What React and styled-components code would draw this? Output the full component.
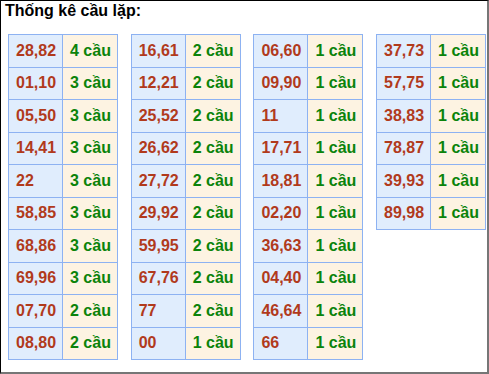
import React from "react";
import styled, { createGlobalStyle } from "styled-components";

const Global = createGlobalStyle`
  html, body { margin: 0; padding: 0; background: #fff; }
  body { font-family: "Liberation Sans", Arial, sans-serif; }
`;

const Frame = styled.div`
  box-sizing: border-box;
  width: 489px;
  height: 374px;
  border-top: 1px solid #000;
  border-left: 1px solid #000;
  border-right: 2px solid #767676;
  border-bottom: 2px solid #767676;
  background: #fff;
  padding-top: 1px;
`;

const Title = styled.div`
  font-size: 16px;
  font-weight: bold;
  color: #000;
  line-height: 18px;
  padding-left: 4px;
`;

const Tables = styled.div`
  display: flex;
  align-items: flex-start;
  gap: 12.7px;
  padding-left: 7px;
  margin-top: 14px;
`;

const Grid = styled.div`
  display: grid;
  grid-template-columns: 54px 55px;
  border-top: 1px solid #8db2f2;
  border-left: 1px solid #8db2f2;
`;

const Cell = styled.div`
  box-sizing: border-box;
  height: 32.5px;
  border-right: 1px solid #8db2f2;
  border-bottom: 1px solid #8db2f2;
  display: flex;
  align-items: center;
  padding-left: ${(p) => (p.$kind === "num" ? "7px" : "7px")};
  font-size: 16px;
  font-weight: bold;
  white-space: nowrap;
  background: ${(p) => (p.$kind === "num" ? "#e0edfd" : "#fdf3e2")};
  color: ${(p) => (p.$kind === "num" ? "#b13a1c" : "#0b830b")};
`;

const data = [
  [
    ["28,82", 4], ["01,10", 3], ["05,50", 3], ["14,41", 3], ["22", 3],
    ["58,85", 3], ["68,86", 3], ["69,96", 3], ["07,70", 2], ["08,80", 2],
  ],
  [
    ["16,61", 2], ["12,21", 2], ["25,52", 2], ["26,62", 2], ["27,72", 2],
    ["29,92", 2], ["59,95", 2], ["67,76", 2], ["77", 2], ["00", 1],
  ],
  [
    ["06,60", 1], ["09,90", 1], ["11", 1], ["17,71", 1], ["18,81", 1],
    ["02,20", 1], ["36,63", 1], ["04,40", 1], ["46,64", 1], ["66", 1],
  ],
  [
    ["37,73", 1], ["57,75", 1], ["38,83", 1], ["78,87", 1], ["39,93", 1],
    ["89,98", 1],
  ],
];

export default function App() {
  return (
    <>
      <Global />
      <Frame>
        <Title>Thống kê cầu lặp:</Title>
        <Tables>
          {data.map((col, i) => (
            <Grid key={i}>
              {col.map(([n, c], j) => (
                <React.Fragment key={j}>
                  <Cell $kind="num">{n}</Cell>
                  <Cell $kind="cnt">{c} cầu</Cell>
                </React.Fragment>
              ))}
            </Grid>
          ))}
        </Tables>
      </Frame>
    </>
  );
}
